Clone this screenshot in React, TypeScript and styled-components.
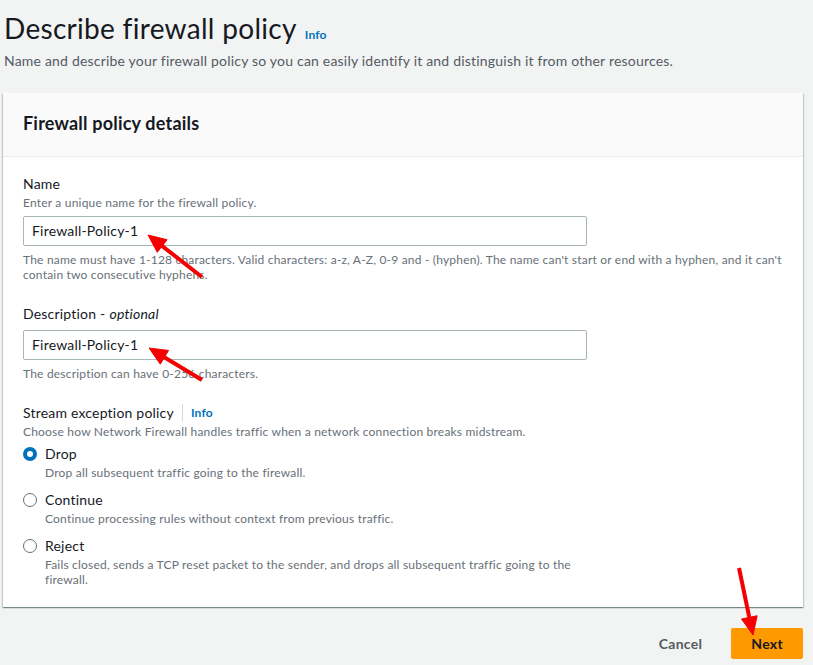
import styled, { createGlobalStyle } from "styled-components";

const GlobalStyle = createGlobalStyle`
  html, body {
    margin: 0;
    padding: 0;
    background: #f2f3f3;
    font-family: Lato, "Liberation Sans", Arial, sans-serif;
    letter-spacing: 0.2px;
    color: #16191f;
  }
  * { box-sizing: border-box; }
`;

const Page = styled.div`
  position: relative;
  width: 813px;
  height: 665px;
  overflow: hidden;
`;

const TitleRow = styled.div`
  display: flex;
  align-items: baseline;
  padding: 10px 0 0 4px;
`;

const Title = styled.h1`
  margin: 0;
  font-size: 28px;
  line-height: 36px;
  font-weight: 400;
  letter-spacing: 0.3px;
  color: #16191f;
`;

const InfoLink = styled.a`
  font-size: 12px;
  font-weight: 700;
  color: #0073bb;
  margin-left: 8px;
  text-decoration: none;
`;

const Subtitle = styled.p`
  margin: 5px 0 0 4px;
  font-size: 14px;
  line-height: 20px;
  color: #545b64;
`;

const Card = styled.section`
  margin: 22px 0 0 3px;
  width: 800px;
  background: #fff;
  box-shadow: 0 1px 1px 0 rgba(0, 28, 36, 0.3), 1px 1px 1px 0 rgba(0, 28, 36, 0.15),
    -1px 1px 1px 0 rgba(0, 28, 36, 0.15);
`;

const CardHeader = styled.div`
  height: 64px;
  display: flex;
  align-items: center;
  padding: 0 20px 4px;
  background: #fafafa;
  border-bottom: 1px solid #eaeded;
`;

const CardTitle = styled.h2`
  margin: 0;
  font-size: 18px;
  font-weight: 700;
  color: #16191f;
`;

const CardBody = styled.div`
  padding: 16px 20px 20px;
  display: flex;
  flex-direction: column;
  gap: 21px;
`;

const Field = styled.div`
  display: flex;
  flex-direction: column;
`;

const Label = styled.label`
  display: flex;
  align-items: center;
  font-size: 14px;
  line-height: 22px;
  color: #16191f;

  em {
    margin-left: 4px;
  }
`;

const Divider = styled.span`
  width: 1px;
  height: 18px;
  background: #d5dbdb;
  margin: 0 8px;
`;

const Hint = styled.div`
  font-size: 12px;
  line-height: 16px;
  color: #687078;
`;

const Constraint = styled.div`
  margin-top: 6px;
  font-size: 12px;
  line-height: 15px;
  color: #687078;
`;

const Input = styled.input`
  margin-top: 5px;
  width: 564px;
  height: 30px;
  padding: 4px 8px 5px;
  border: 1px solid #aab7b8;
  border-radius: 2px;
  font-family: inherit;
  font-size: 14px;
  letter-spacing: 0.2px;
  color: #16191f;
  outline: none;
`;

const RadioGroup = styled.div`
  margin-top: 3px;
  display: flex;
  flex-direction: column;
  gap: 9px;
`;

const RadioRow = styled.div`
  display: flex;
  align-items: flex-start;
  gap: 8px;
`;

const RadioDot = styled.span<{ $checked?: boolean }>`
  flex: none;
  margin-top: 4px;
  width: 14px;
  height: 14px;
  border-radius: 50%;
  background: #fff;
  border: ${(p) => (p.$checked ? "4px solid #0073bb" : "1.5px solid #687078")};
`;

const RadioText = styled.div`
  max-width: 540px;
`;

const RadioLabel = styled.div`
  font-size: 14px;
  line-height: 22px;
  color: #16191f;
`;

const RadioHint = styled.div`
  font-size: 12px;
  line-height: 15px;
  color: #687078;
`;

const Footer = styled.div`
  display: flex;
  justify-content: flex-end;
  align-items: center;
  gap: 9px;
  margin: 21px 10px 0 0;
`;

const Button = styled.button<{ $primary?: boolean }>`
  height: 31px;
  padding: 0 20px;
  border: none;
  border-radius: 2px;
  font-family: inherit;
  font-size: 14px;
  font-weight: 700;
  letter-spacing: 0.3px;
  background: ${(p) => (p.$primary ? "#ff9900" : "transparent")};
  color: ${(p) => (p.$primary ? "#16191f" : "#545b64")};
`;

const Overlay = styled.svg`
  position: absolute;
  top: 0;
  left: 0;
  pointer-events: none;
`;

type ArrowProps = { x1: number; y1: number; x2: number; y2: number };

const Arrow = ({ x1, y1, x2, y2 }: ArrowProps) => {
  const dx = x2 - x1;
  const dy = y2 - y1;
  const len = Math.hypot(dx, dy);
  const ux = dx / len;
  const uy = dy / len;
  const head = 18;
  const half = 8;
  const bx = x2 - head * ux;
  const by = y2 - head * uy;
  const nx = -uy;
  const ny = ux;
  const pts = `${x2},${y2} ${bx + half * nx},${by + half * ny} ${bx - half * nx},${by - half * ny}`;
  return (
    <g fill="#f50000" stroke="#f50000">
      <line x1={x1} y1={y1} x2={bx + 2 * ux} y2={by + 2 * uy} strokeWidth={4} />
      <polygon points={pts} strokeWidth={1} strokeLinejoin="round" />
    </g>
  );
};

const options = [
  { name: "Drop", hint: "Drop all subsequent traffic going to the firewall.", checked: true },
  { name: "Continue", hint: "Continue processing rules without context from previous traffic." },
  {
    name: "Reject",
    hint: "Fails closed, sends a TCP reset packet to the sender, and drops all subsequent traffic going to the firewall.",
  },
];

export default function App() {
  return (
    <Page>
      <GlobalStyle />
      <TitleRow>
        <Title>Describe firewall policy</Title>
        <InfoLink>Info</InfoLink>
      </TitleRow>
      <Subtitle>
        Name and describe your firewall policy so you can easily identify it and distinguish it from other resources.
      </Subtitle>

      <Card>
        <CardHeader>
          <CardTitle>Firewall policy details</CardTitle>
        </CardHeader>
        <CardBody>
          <Field>
            <Label>Name</Label>
            <Hint>Enter a unique name for the firewall policy.</Hint>
            <Input defaultValue="Firewall-Policy-1" />
            <Constraint>
              The name must have 1-128 characters. Valid characters: a-z, A-Z, 0-9 and - (hyphen). The name can't start
              or end with a hyphen, and it can't contain two consecutive hyphens.
            </Constraint>
          </Field>

          <Field>
            <Label>
              Description - <em>optional</em>
            </Label>
            <Input defaultValue="Firewall-Policy-1" />
            <Constraint>The description can have 0-256 characters.</Constraint>
          </Field>

          <Field>
            <Label>
              Stream exception policy
              <Divider />
              <InfoLink style={{ marginLeft: 0 }}>Info</InfoLink>
            </Label>
            <Hint>Choose how Network Firewall handles traffic when a network connection breaks midstream.</Hint>
            <RadioGroup>
              {options.map((o) => (
                <RadioRow key={o.name}>
                  <RadioDot $checked={o.checked} />
                  <RadioText>
                    <RadioLabel>{o.name}</RadioLabel>
                    <RadioHint>{o.hint}</RadioHint>
                  </RadioText>
                </RadioRow>
              ))}
            </RadioGroup>
          </Field>
        </CardBody>
      </Card>

      <Footer>
        <Button>Cancel</Button>
        <Button $primary>Next</Button>
      </Footer>

      <Overlay width={813} height={665}>
        <Arrow x1={202} y1={277} x2={148} y2={235} />
        <Arrow x1={202} y1={380} x2={149} y2={348} />
        <Arrow x1={739} y1={568} x2={753} y2={635} />
      </Overlay>
    </Page>
  );
}
